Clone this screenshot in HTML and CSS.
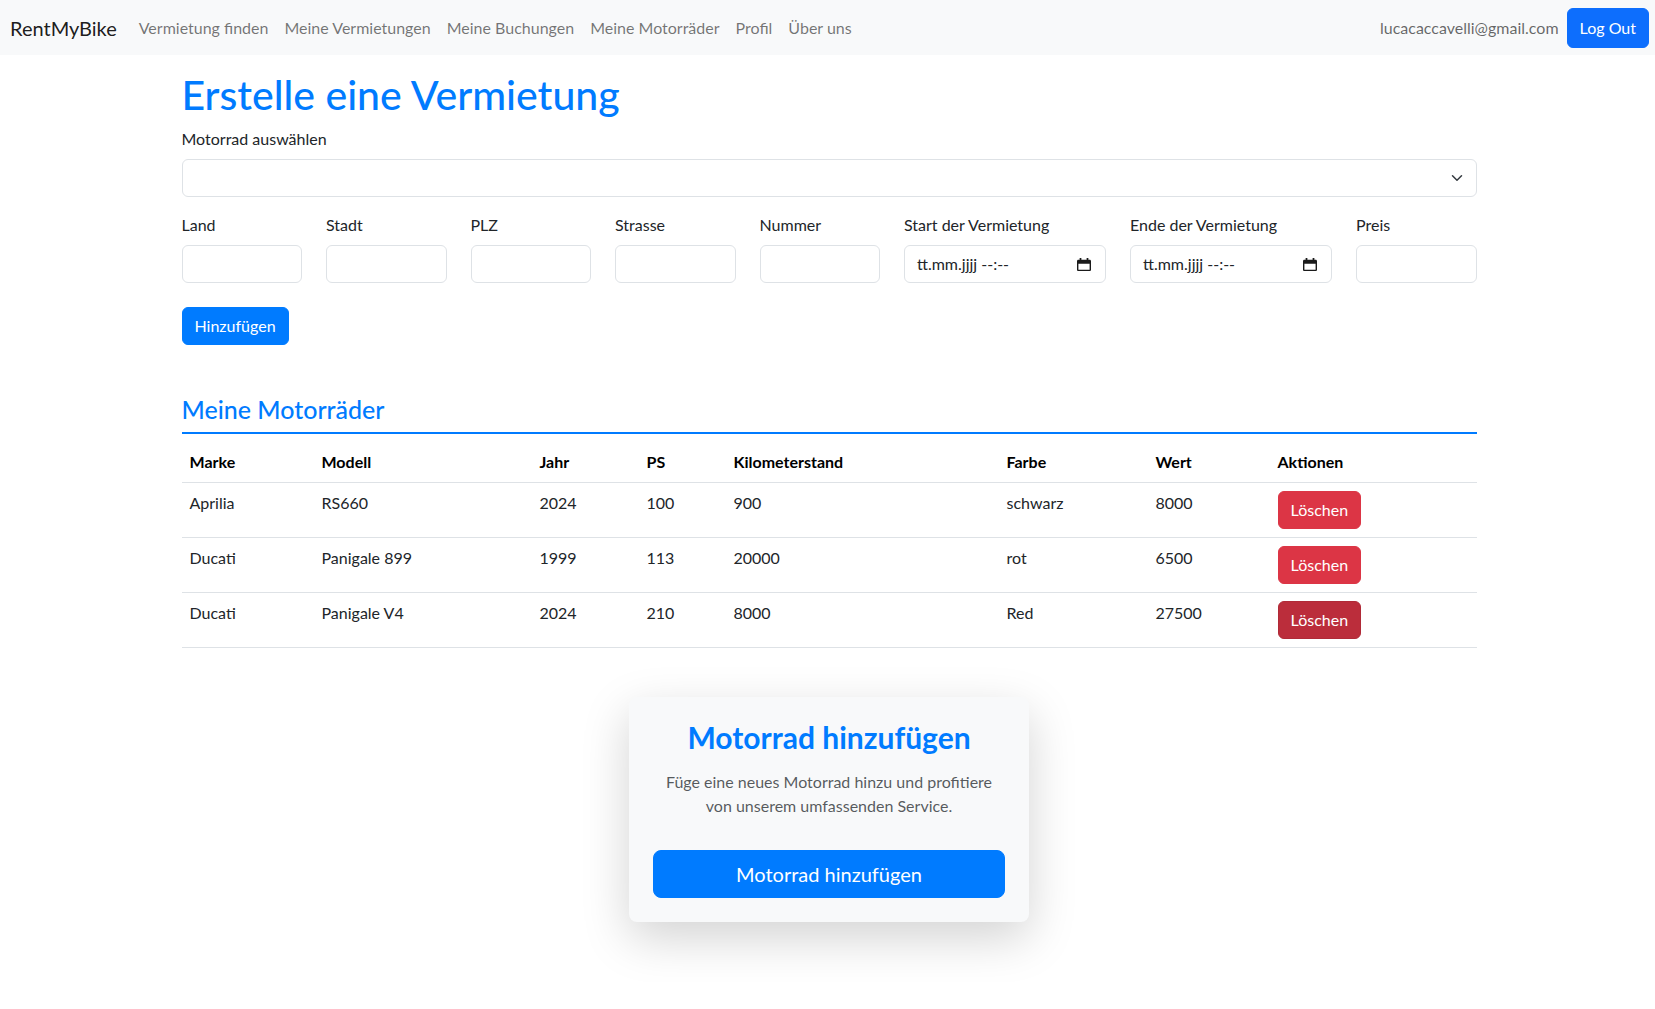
FILE: index.html
```html
<!DOCTYPE html>
<html lang="de">
<head>
<meta charset="utf-8">
<title>RentMyBike</title>
<link rel="stylesheet" href="styles.css">
</head>
<body>
<nav class="navbar">
  <a class="brand" href="#">RentMyBike</a>
  <ul class="nav-links">
    <li><a href="#">Vermietung finden</a></li>
    <li><a href="#">Meine Vermietungen</a></li>
    <li><a href="#">Meine Buchungen</a></li>
    <li><a href="#">Meine Motorräder</a></li>
    <li><a href="#">Profil</a></li>
    <li><a href="#">Über uns</a></li>
  </ul>
  <div class="nav-right">
    <span class="nav-email">lucacaccavelli@gmail.com</span>
    <button class="btn btn-logout" type="button">Log Out</button>
  </div>
</nav>

<main class="container">
  <h1 class="page-title">Erstelle eine Vermietung</h1>

  <div class="field field-select">
    <label class="form-label">Motorrad auswählen</label>
    <div class="select-wrap">
      <select class="form-control form-select"></select>
      <svg class="select-chevron" viewBox="0 0 16 16" width="16" height="12"><path d="M2 5l6 6 6-6" fill="none" stroke="#343a40" stroke-width="2" stroke-linecap="round" stroke-linejoin="round"/></svg>
    </div>
  </div>

  <div class="field-row">
    <div class="field"><label class="form-label">Land</label><input class="form-control" type="text"></div>
    <div class="field"><label class="form-label">Stadt</label><input class="form-control" type="text"></div>
    <div class="field"><label class="form-label">PLZ</label><input class="form-control" type="text"></div>
    <div class="field"><label class="form-label">Strasse</label><input class="form-control" type="text"></div>
    <div class="field"><label class="form-label">Nummer</label><input class="form-control" type="text"></div>
    <div class="field"><label class="form-label">Start der Vermietung</label>
      <div class="form-control date-control"><span class="date-text">tt.mm.jjjj --:--</span>
        <svg class="cal-icon" viewBox="0 0 16 16" width="14" height="15"><path d="M3 0.5h2v2h6v-2h2v2h1.5c.8 0 1.5.7 1.5 1.5v10c0 .8-.7 1.5-1.5 1.5h-13C.7 15.5 0 14.8 0 14V4c0-.8.7-1.5 1.5-1.5H3z M1.6 7v6.9h12.8V7z" fill="#1a1a1a" fill-rule="evenodd"/></svg>
      </div>
    </div>
    <div class="field"><label class="form-label">Ende der Vermietung</label>
      <div class="form-control date-control"><span class="date-text">tt.mm.jjjj --:--</span>
        <svg class="cal-icon" viewBox="0 0 16 16" width="14" height="15"><path d="M3 0.5h2v2h6v-2h2v2h1.5c.8 0 1.5.7 1.5 1.5v10c0 .8-.7 1.5-1.5 1.5h-13C.7 15.5 0 14.8 0 14V4c0-.8.7-1.5 1.5-1.5H3z M1.6 7v6.9h12.8V7z" fill="#1a1a1a" fill-rule="evenodd"/></svg>
      </div>
    </div>
    <div class="field"><label class="form-label">Preis</label><input class="form-control" type="text"></div>
  </div>

  <button class="btn btn-primary" type="button">Hinzufügen</button>

  <section class="bikes">
    <h2 class="section-title">Meine Motorräder</h2>
    <table class="table">
      <colgroup>
        <col class="c-marke"><col class="c-modell"><col class="c-jahr"><col class="c-ps">
        <col class="c-km"><col class="c-farbe"><col class="c-wert"><col class="c-akt">
      </colgroup>
      <thead>
        <tr><th>Marke</th><th>Modell</th><th>Jahr</th><th>PS</th><th>Kilometerstand</th><th>Farbe</th><th>Wert</th><th>Aktionen</th></tr>
      </thead>
      <tbody>
        <tr><td>Aprilia</td><td>RS660</td><td>2024</td><td>100</td><td>900</td><td>schwarz</td><td>8000</td><td><button class="btn btn-danger" type="button">Löschen</button></td></tr>
        <tr><td>Ducati</td><td>Panigale 899</td><td>1999</td><td>113</td><td>20000</td><td>rot</td><td>6500</td><td><button class="btn btn-danger" type="button">Löschen</button></td></tr>
        <tr><td>Ducati</td><td>Panigale V4</td><td>2024</td><td>210</td><td>8000</td><td>Red</td><td>27500</td><td><button class="btn btn-danger btn-danger-active" type="button">Löschen</button></td></tr>
      </tbody>
    </table>
  </section>

  <div class="promo-card">
    <h3 class="promo-title">Motorrad hinzufügen</h3>
    <p class="promo-text">Füge eine neues Motorrad hinzu und profitiere von unserem umfassenden Service.</p>
    <button class="btn btn-primary btn-lg btn-block" type="button">Motorrad hinzufügen</button>
  </div>
</main>
</body>
</html>
```
FILE: styles.css
```css
* { box-sizing: border-box; }

html, body {
  margin: 0;
  padding: 0;
  background: #fff;
}

body {
  font-family: Lato, Roboto, "Noto Sans", sans-serif;
  font-size: 16px;
  line-height: 1.5;
  color: #212529;
}

/* Navbar */
.navbar {
  display: flex;
  align-items: center;
  height: 55px;
  padding: 0 6px 0 10px;
  background: #f8f9fa;
}

.brand {
  font-size: 20px;
  line-height: 30px;
  color: rgba(0, 0, 0, 0.9);
  text-decoration: none;
  margin-right: 14px;
}

.nav-links {
  display: flex;
  list-style: none;
  margin: 0;
  padding: 0;
}

.nav-links a {
  display: block;
  padding: 8px;
  color: rgba(0, 0, 0, 0.55);
  text-decoration: none;
}

.nav-right {
  margin-left: auto;
  display: flex;
  align-items: center;
}

.nav-email {
  padding: 8px;
  color: rgba(0, 0, 0, 0.6);
}

/* Buttons */
.btn {
  display: inline-block;
  font-family: inherit;
  font-size: 16px;
  line-height: 24px;
  padding: 6px 12px;
  border: 1px solid transparent;
  border-radius: 6px;
  color: #fff;
  cursor: pointer;
}

.btn-logout {
  background: #0d6efd;
  border-color: #0d6efd;
  padding: 7px 12px;
}

.btn-primary {
  background: #007bff;
  border-color: #007bff;
}

.btn-danger {
  background: #dc3545;
  border-color: #dc3545;
}

.btn-danger-active {
  background: #bb2d3b;
  border-color: #b02a37;
}

.btn-lg {
  font-size: 20px;
  line-height: 30px;
  padding: 8px 16px;
  border-radius: 8px;
}

.btn-block {
  display: block;
  width: 100%;
}

/* Layout */
.container {
  max-width: 1320px;
  margin: 0 auto;
  padding: 16px 11px 60px 14px;
}

.page-title {
  margin: 0 0 8px;
  font-size: 41px;
  line-height: 48px;
  font-weight: 500;
  color: #007bff;
}

.form-label {
  display: block;
  margin-bottom: 8px;
  line-height: 24px;
}

.field-select {
  margin-bottom: 16px;
}

.form-control {
  display: block;
  width: 100%;
  height: 38px;
  padding: 6px 12px;
  font-family: inherit;
  font-size: 16px;
  line-height: 24px;
  color: #212529;
  background: #fff;
  border: 1px solid #dee2e6;
  border-radius: 6px;
}

.select-wrap {
  position: relative;
}

.form-select {
  appearance: none;
  -webkit-appearance: none;
  padding-right: 36px;
}

.select-chevron {
  position: absolute;
  right: 12px;
  top: 13px;
  pointer-events: none;
}

.field-row {
  display: grid;
  grid-template-columns: 1fr 1fr 1fr 1fr 1fr 202px 202px 1fr;
  gap: 24px;
  margin-bottom: 24px;
}

.date-control {
  display: flex;
  align-items: center;
  justify-content: space-between;
  padding-right: 14px;
}

.date-text {
  white-space: nowrap;
}

.cal-icon {
  flex: none;
}

/* Section */
.bikes {
  margin-top: 50px;
}

.section-title {
  margin: 0 0 8px;
  padding-bottom: 8px;
  font-size: 25px;
  line-height: 28.8px;
  font-weight: 500;
  color: #007bff;
  border-bottom: 2px solid #007bff;
}

.table {
  width: 100%;
  table-layout: fixed;
  border-collapse: collapse;
  margin: 0;
}

.c-marke { width: 132px; }
.c-modell { width: 218px; }
.c-jahr { width: 107px; }
.c-ps { width: 87px; }
.c-km { width: 273px; }
.c-farbe { width: 149px; }
.c-wert { width: 122px; }
.c-akt { width: auto; }

.table th,
.table td {
  padding: 8px;
  text-align: left;
  vertical-align: top;
  border-bottom: 1px solid #dee2e6;
  line-height: 24px;
}

.table th {
  font-weight: 700;
  color: #000;
}

/* Promo card */
.promo-card {
  width: 400px;
  margin: 49px auto 0;
  padding: 24px;
  background: #f8f9fa;
  border-radius: 8px;
  box-shadow: 0 16px 48px rgba(0, 0, 0, 0.175);
  text-align: center;
}

.promo-title {
  margin: 0 0 16px;
  font-size: 30px;
  line-height: 33.6px;
  font-weight: 700;
  color: #007bff;
}

.promo-text {
  margin: 0 0 32px;
  color: rgba(33, 37, 41, 0.75);
}
```
